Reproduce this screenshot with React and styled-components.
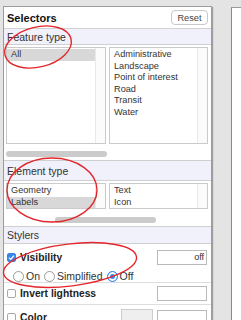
import React from "react";
import styled, { createGlobalStyle } from "styled-components";

const GlobalStyle = createGlobalStyle`
  html, body {
    margin: 0;
    padding: 0;
    background: #e4e4e4;
    overflow: hidden;
  }
  body {
    font-family: "Liberation Sans", Arial, sans-serif;
    color: #222;
  }
`;

const Page = styled.div`
  position: relative;
  display: flex;
  gap: 19px;
  width: 241px;
  height: 320px;
  padding: 6px 0 0 3px;
  box-sizing: border-box;
  overflow: hidden;
`;

const Panel = styled.div`
  flex: none;
  width: 209px;
  height: 340px;
  background: #fff;
  border: 1px solid #9c9c9c;
  box-sizing: border-box;
  box-shadow: 1px 1px 1px rgba(0, 0, 0, 0.3);
  overflow: hidden;
`;

const SidePanel = styled.div`
  flex: 1;
  margin-top: 1px;
  background: #fff;
  border-left: 1px solid #8a8a8a;
  border-top: 1px solid #9a9a9a;
`;

const Header = styled.div`
  display: flex;
  align-items: center;
  justify-content: space-between;
  height: 21px;
  padding: 0 3px 0 3px;
  border-bottom: 1px solid #d2d2d2;
`;

const Title = styled.div`
  font-size: 11px;
  font-weight: bold;
  color: #111;
`;

const ResetButton = styled.button`
  width: 37px;
  height: 15px;
  padding: 0;
  border: 1px solid #c8c8c8;
  border-radius: 4px;
  background: #fff;
  font-family: inherit;
  font-size: 9.2px;
  color: #444;
`;

const SectionHeader = styled.div`
  display: flex;
  align-items: center;
  height: ${(p) => p.$h}px;
  padding-left: 3px;
  background: #f1f1fb;
  border-bottom: 1px solid #cfcfcf;
  border-top: ${(p) => (p.$top ? "1px solid #cfcfcf" : "none")};
  font-size: 10.5px;
  color: #333;
`;

const ListsRow = styled.div`
  display: flex;
  gap: 3px;
  padding: 2px 0 0 2px;
`;

const ListBox = styled.div`
  flex: none;
  display: flex;
  width: ${(p) => p.$w}px;
  height: ${(p) => p.$h}px;
  border: 1px solid #cacaca;
  box-sizing: border-box;
`;

const Items = styled.div`
  flex: 1;
  padding-top: 1px;
`;

const Item = styled.div`
  height: 11.6px;
  line-height: 11.6px;
  padding: 0 4px;
  font-size: 9.2px;
  color: #333;
  white-space: nowrap;
  background: ${(p) => (p.$selected ? "#d8d8d8" : "transparent")};
`;

const ScrollTrack = styled.div`
  flex: none;
  width: 9px;
  border-left: 1px solid #e9e9e9;
  background: #fbfbfb;
`;

const HScroll = styled.div`
  height: 6px;
  padding-left: ${(p) => p.$left}px;
  margin: ${(p) => p.$mt}px 0 3px 0;
`;

const Thumb = styled.div`
  width: 101px;
  height: 6px;
  border-radius: 3px;
  background: #cbcbcb;
`;

const StylerRow = styled.div`
  padding: ${(p) => p.$pt}px 4px 0 3px;
  height: ${(p) => p.$h}px;
  box-sizing: border-box;
  border-bottom: 1px solid #dedede;
`;

const RowLine = styled.div`
  display: flex;
  align-items: center;
  gap: 4px;
`;

const CheckBox = styled.span`
  flex: none;
  display: flex;
  align-items: center;
  justify-content: center;
  width: 9px;
  height: 9px;
  border: 1px solid ${(p) => (p.$checked ? "#3a86e8" : "#a8a8a8")};
  border-radius: 2px;
  background: ${(p) => (p.$checked ? "#3a86e8" : "#fff")};
  box-sizing: border-box;
`;

const Label = styled.span`
  flex: 1;
  font-size: 10.3px;
  font-weight: bold;
  color: #222;
`;

const Swatch = styled.span`
  width: 32px;
  height: 16px;
  background: #efefef;
  border: 1px solid #cdcdcd;
  box-sizing: border-box;
`;

const ValueInput = styled.div`
  width: 50px;
  height: 15px;
  line-height: 13px;
  padding-right: 2px;
  border: 1px solid #b9b9b9;
  box-sizing: border-box;
  text-align: right;
  font-size: 9px;
  color: #333;
`;

const RadioGroup = styled.div`
  display: flex;
  align-items: center;
  gap: 4px;
  padding: 5px 0 0 6px;
`;

const RadioOption = styled.label`
  display: flex;
  align-items: center;
  gap: 2px;
  font-size: 10.5px;
  color: #333;
`;

const RadioDot = styled.span`
  width: 11px;
  height: 11px;
  border-radius: 50%;
  box-sizing: border-box;
  border: 1px solid ${(p) => (p.$on ? "#2f8cee" : "#9a9a9a")};
  background: ${(p) => (p.$on ? "#2f8cee" : "#fff")};
  box-shadow: ${(p) => (p.$on ? "inset 0 0 0 2px #fff" : "none")};
`;

const Overlay = styled.svg`
  position: absolute;
  left: 0;
  top: 0;
  pointer-events: none;
`;

const featureTypes = [
  "Administrative",
  "Landscape",
  "Point of interest",
  "Road",
  "Transit",
  "Water",
];

function List({ items, selected, w, h }) {
  return (
    <ListBox $w={w} $h={h}>
      <Items>
        {items.map((it) => (
          <Item key={it} $selected={it === selected}>
            {it}
          </Item>
        ))}
      </Items>
      <ScrollTrack />
    </ListBox>
  );
}

function Check({ checked }) {
  return (
    <CheckBox $checked={checked}>
      {checked && (
        <svg width="7" height="7" viewBox="0 0 8 8">
          <path d="M1.2 4.2 L3.2 6.1 L6.8 1.8" stroke="#fff" strokeWidth="1.4" fill="none" />
        </svg>
      )}
    </CheckBox>
  );
}

export default function App() {
  return (
    <>
      <GlobalStyle />
      <Page>
        <Panel>
          <Header>
            <Title>Selectors</Title>
            <ResetButton>Reset</ResetButton>
          </Header>

          <SectionHeader $h={15}>Feature type</SectionHeader>
          <ListsRow>
            <List items={["All"]} selected="All" w={100} h={97} />
            <List items={featureTypes} w={99} h={97} />
            <List items={[]} w={60} h={97} />
          </ListsRow>
          <HScroll $left={2} $mt={7}>
            <Thumb />
          </HScroll>

          <SectionHeader $h={19} $top>Element type</SectionHeader>
          <ListsRow>
            <List items={["Geometry", "Labels"]} selected="Labels" w={100} h={26} />
            <List items={["Text", "Icon"]} w={99} h={26} />
          </ListsRow>
          <HScroll $left={51} $mt={8}>
            <Thumb />
          </HScroll>

          <SectionHeader $h={16} $top>Stylers</SectionHeader>
          <StylerRow $pt={6} $h={39}>
            <RowLine>
              <Check checked />
              <Label>Visibility</Label>
              <ValueInput>off</ValueInput>
            </RowLine>
            <RadioGroup>
              <RadioOption>
                <RadioDot />
                On
              </RadioOption>
              <RadioOption>
                <RadioDot />
                Simplified
              </RadioOption>
              <RadioOption>
                <RadioDot $on />
                Off
              </RadioOption>
            </RadioGroup>
          </StylerRow>
          <StylerRow $pt={3} $h={22}>
            <RowLine>
              <Check />
              <Label>Invert lightness</Label>
              <ValueInput />
            </RowLine>
          </StylerRow>
          <StylerRow $pt={4} $h={24}>
            <RowLine>
              <Check />
              <Label>Color</Label>
              <Swatch />
              <ValueInput />
            </RowLine>
          </StylerRow>
        </Panel>
        <SidePanel />

        <Overlay width="241" height="320" viewBox="0 0 241 320">
          <g fill="none" stroke="#e3262b" strokeWidth="1.4">
            <ellipse cx="38" cy="47" rx="34" ry="20" transform="rotate(-14 38 47)" />
            <ellipse cx="52" cy="190" rx="45" ry="32" />
            <ellipse cx="70" cy="265" rx="67" ry="21" transform="rotate(-7 70 265)" />
          </g>
        </Overlay>
      </Page>
    </>
  );
}
